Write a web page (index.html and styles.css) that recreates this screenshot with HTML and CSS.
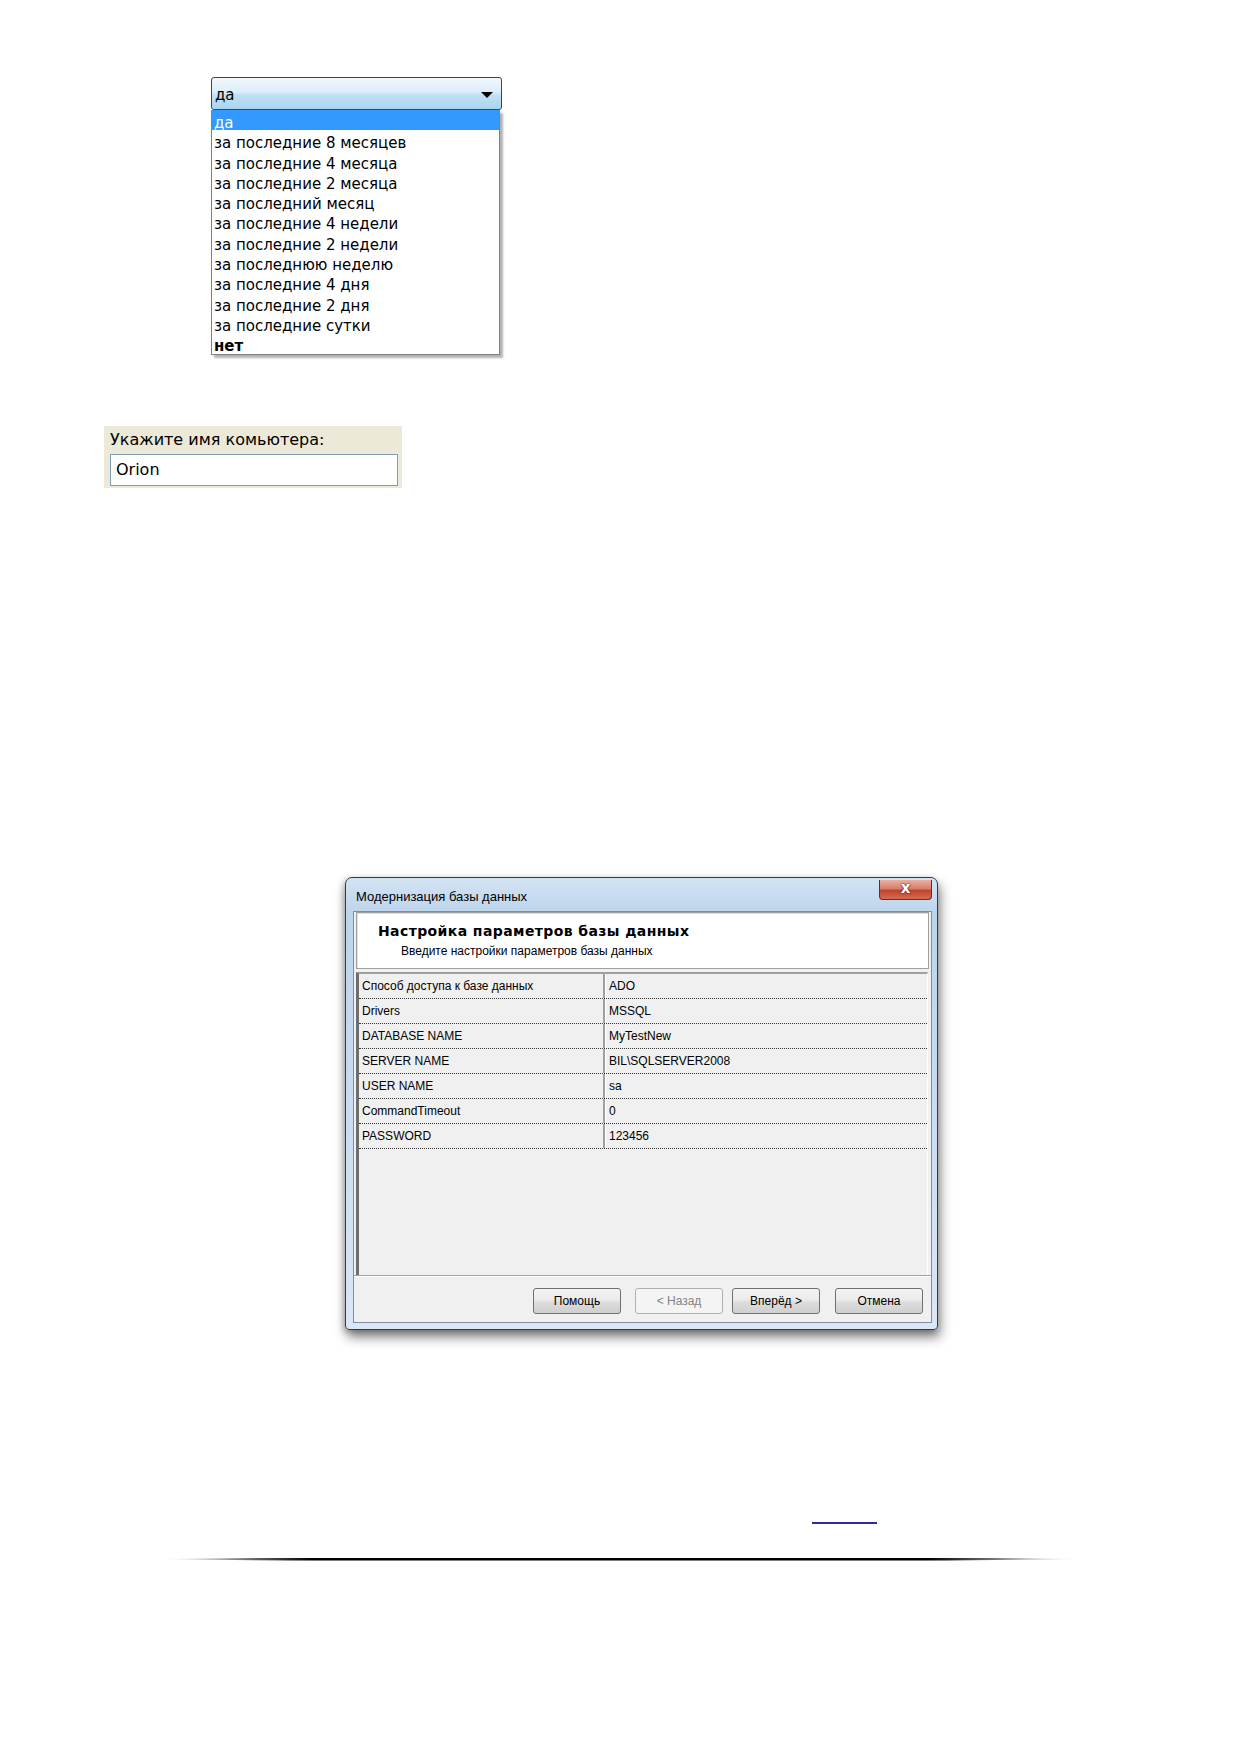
FILE: index.html
```html
<!DOCTYPE html>
<html lang="ru">
<head>
    <meta charset="UTF-8">
    <meta name="viewport" content="width=device-width, initial-scale=1.0">
    <title>Настройка параметров</title>
    <link rel="stylesheet" href="styles.css">
</head>
<body>
    <div class="page">
        <!-- period combo, opened -->
        <div class="combo">
            <div class="combo-field">
                <span>да</span>
                <span class="combo-arrow"></span>
            </div>
            <ul class="combo-list">
                <li class="selected">да</li>
                <li>за последние 8 месяцев</li>
                <li>за последние 4 месяца</li>
                <li>за последние 2 месяца</li>
                <li>за последний месяц</li>
                <li>за последние 4 недели</li>
                <li>за последние 2 недели</li>
                <li>за последнюю неделю</li>
                <li>за последние 4 дня</li>
                <li>за последние 2 дня</li>
                <li>за последние сутки</li>
                <li class="bold">нет</li>
            </ul>
        </div>

        <div class="name-panel">
            <label for="pcName">Укажите имя комьютера:</label>
            <input type="text" id="pcName" value="Orion">
        </div>

        <!-- database upgrade wizard -->
        <div class="dialog">
            <div class="titlebar">
                <span class="title">Модернизация базы данных</span>
                <span class="close-btn">x</span>
            </div>
            <div class="dlg-body">
                <div class="dlg-header">
                    <h2>Настройка параметров базы данных</h2>
                    <p>Введите настройки параметров базы данных</p>
                </div>
                <div class="grid">
                    <div class="row"><span class="key">Способ доступа к базе данных</span><span class="val">ADO</span></div>
                    <div class="row"><span class="key">Drivers</span><span class="val">MSSQL</span></div>
                    <div class="row"><span class="key">DATABASE NAME</span><span class="val">MyTestNew</span></div>
                    <div class="row"><span class="key">SERVER NAME</span><span class="val">BIL\SQLSERVER2008</span></div>
                    <div class="row"><span class="key">USER NAME</span><span class="val">sa</span></div>
                    <div class="row"><span class="key">CommandTimeout</span><span class="val">0</span></div>
                    <div class="row"><span class="key">PASSWORD</span><span class="val">123456</span></div>
                </div>
                <div class="buttons">
                    <button>Помощь</button>
                    <div class="btn-group">
                        <button disabled>&lt; Назад</button>
                        <button>Вперёд &gt;</button>
                    </div>
                    <button>Отмена</button>
                </div>
            </div>
        </div>

        <div class="note"><a href="#" class="note-link"></a></div>
        <div class="rule"></div>
    </div>
</body>
</html>
```

FILE: styles.css
```css
* {
    box-sizing: border-box;
}
body {
    margin: 0;
    background: #fff;
    font-family: "Liberation Sans", Arial, sans-serif;
    color: #000;
}
.page {
    padding-top: 77px;
    padding-bottom: 150px;
}

/* combo */
.combo {
    margin-left: 211px;
    width: 291px;
    font-family: "DejaVu Sans", sans-serif;
    font-size: 15px;
}
.combo-field {
    height: 33px;
    border: 1px solid #2f4a60;
    border-radius: 3px;
    background: linear-gradient(#f1f8fd, #dcedf9 45%, #c1e1f4 55%, #a9d4ef);
    display: flex;
    align-items: center;
    justify-content: space-between;
    padding: 3px 8px 0 3px;
}
.combo-arrow {
    width: 0;
    height: 0;
    border-left: 6px solid transparent;
    border-right: 6px solid transparent;
    border-top: 6px solid #000;
}
.combo-list {
    list-style: none;
    margin: 0;
    padding: 0;
    width: 289px;
    background: #fff;
    border: 1px solid #808080;
    border-top: none;
    box-shadow: 3px 3px 2px rgba(0, 0, 0, 0.3);
}
.combo-list li {
    height: 20.3px;
    line-height: 20px;
    padding: 3px 0 0 2px;
    white-space: nowrap;
}
.combo-list li.selected {
    background: #3399ff;
    color: #fff;
}
.combo-list li.bold {
    font-weight: bold;
}

/* computer name */
.name-panel {
    margin: 71px 0 0 104px;
    width: 298px;
    height: 62px;
    background: #ece9d8;
    padding: 3px 4px 0 6px;
    font-family: "DejaVu Sans", sans-serif;
    font-size: 16px;
}
.name-panel label {
    display: block;
    height: 22px;
    line-height: 22px;
}
.name-panel input {
    display: block;
    width: 288px;
    height: 32px;
    margin-top: 3px;
    border: 1px solid #7f9db9;
    padding: 0 5px;
    font: inherit;
    color: #000;
    background: #fff;
}

/* dialog */
.dialog {
    margin: 389px 0 0 345px;
    width: 593px;
    height: 453px;
    border: 1px solid #2f3b47;
    border-radius: 7px 7px 4px 4px;
    padding: 0 5px 6px 7px;
    background: linear-gradient(#d3e3f3, #bdd4ec 8%, #c9dcf0 50%, #d9e7f6);
    box-shadow: 2px 7px 12px rgba(0, 0, 0, 0.5), -2px 2px 6px rgba(0, 0, 0, 0.2);
    display: flex;
    flex-direction: column;
}
.titlebar {
    height: 33px;
    display: flex;
    justify-content: space-between;
    align-items: flex-start;
}
.title {
    font-size: 13px;
    padding: 11px 0 0 3px;
    color: #000;
}
.close-btn {
    margin: 2px 0 0 0;
    width: 53px;
    height: 20px;
    border: 1px solid #6a2b22;
    border-top: none;
    border-radius: 0 0 4px 4px;
    background: linear-gradient(#eab0a3, #d8806d 45%, #c0432e 55%, #d66b50);
    color: #fff;
    font-family: "DejaVu Sans", sans-serif;
    font-weight: bold;
    font-size: 15px;
    line-height: 16px;
    text-align: center;
    text-shadow: 0 0 2px #5a1a10, 0 0 1px #5a1a10;
}
.dlg-body {
    flex: 1;
    background: #f0f0f0;
    border: 1px solid #7d8fa3;
    display: flex;
    flex-direction: column;
}
.dlg-header {
    margin: 0 2px 0 2px;
    height: 57px;
    background: #fff;
    border: 1px solid #a0a0a0;
    box-shadow: inset 1px 1px 0 #e2e2e2;
    padding: 9px 0 0 21px;
}
.dlg-header h2 {
    margin: 0;
    font-family: "DejaVu Sans", sans-serif;
    font-size: 14px;
    line-height: 18px;
    letter-spacing: 0.4px;
}
.dlg-header p {
    margin: 4px 0 0 23px;
    font-size: 12px;
    line-height: 14px;
}
.grid {
    margin: 3px 3px 0 2px;
    height: 303px;
    border-top: 2px solid #a0a0a0;
    border-left: 3px solid #6e6e6e;
    border-right: 1px solid #fff;
    font-size: 12px;
}
.row {
    display: flex;
    height: 25px;
    border-bottom: 1px dotted #333;
}
.key {
    width: 246px;
    padding: 5px 0 0 3px;
    border-right: 2px solid #a0a0a0;
    box-shadow: 1px 0 0 #fff;
}
.val {
    flex: 1;
    padding: 5px 0 0 4px;
}
.buttons {
    flex: 1;
    border-top: 1px solid #a0a0a0;
    box-shadow: inset 0 1px 0 #fff;
    display: flex;
    justify-content: flex-end;
    align-items: flex-start;
    padding: 12px 8px 0 0;
    gap: 14px;
}
.btn-group {
    display: flex;
    gap: 9px;
    margin-right: 1px;
}
button {
    width: 88px;
    height: 26px;
    border: 1px solid #707070;
    border-radius: 3px;
    background: linear-gradient(#f2f2f2, #ebebeb 45%, #dddddd 55%, #cfcfcf);
    font-family: "Liberation Sans", Arial, sans-serif;
    font-size: 12px;
    color: #000;
    padding: 0;
}
button:disabled {
    border-color: #adb2b5;
    background: #f4f4f4;
    color: #838383;
}

/* footer bits */
.note {
    margin-top: 192px;
    padding-left: 812px;
    height: 2px;
}
.note-link {
    display: block;
    width: 65px;
    height: 2px;
    background: #2a2aa6;
}
.rule {
    margin: 34px 0 0 166px;
    width: 908px;
    height: 3px;
    background: linear-gradient(to right, rgba(0, 0, 0, 0), #000 16%, #000 84%, rgba(0, 0, 0, 0));
    clip-path: polygon(0 45%, 14% 0, 86% 0, 100% 45%, 100% 55%, 86% 100%, 14% 100%, 0 55%);
}
```
